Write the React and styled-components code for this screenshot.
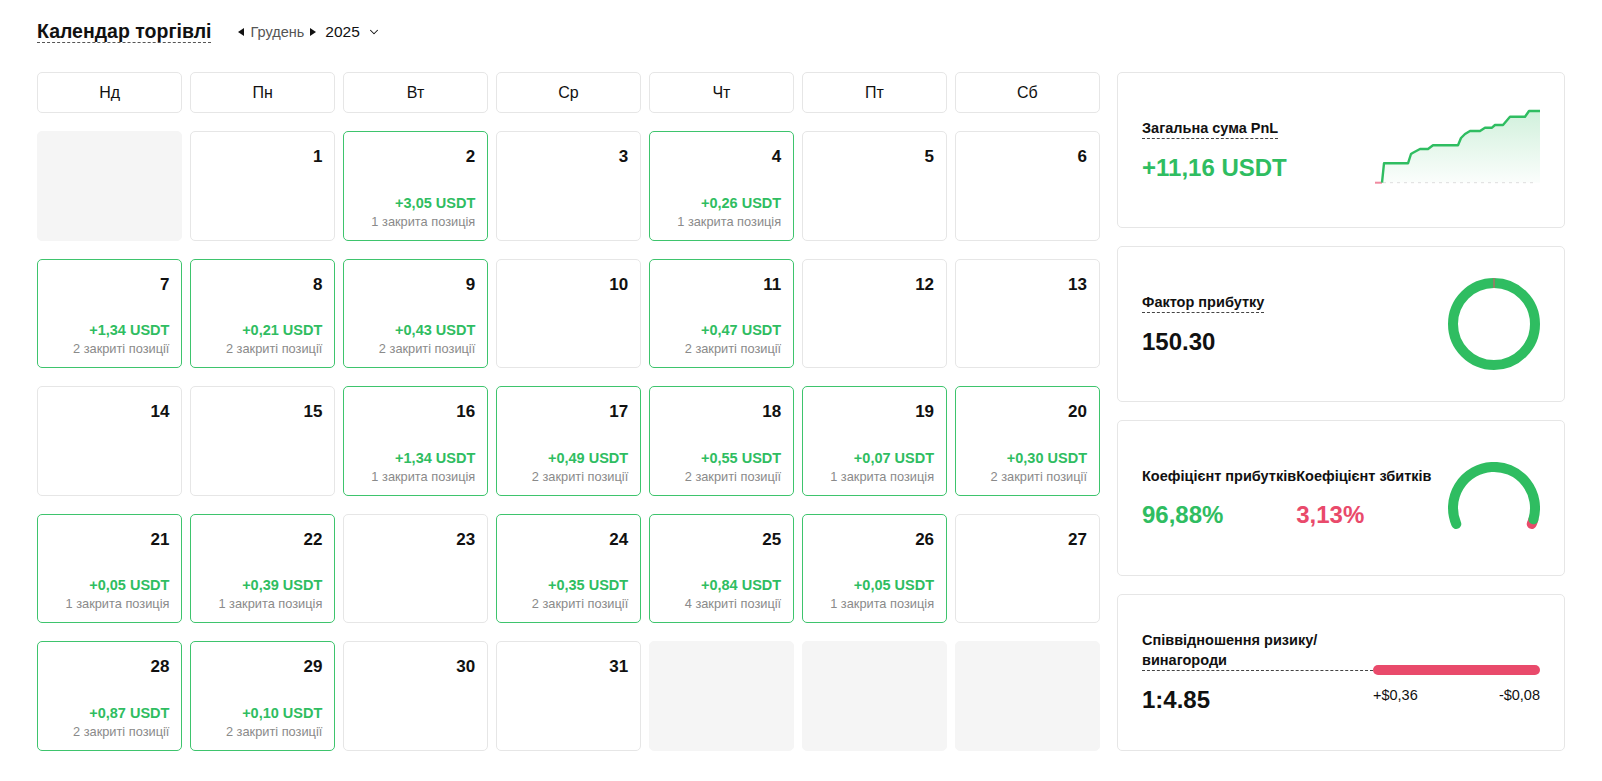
import React from 'react';
import styled, {createGlobalStyle} from 'styled-components';
import {ChevronDown} from 'lucide-react';

const GREEN = '#2fbd61';
const RED = '#e94a6b';

const Global = createGlobalStyle`
  html, body {
    margin: 0;
    background: #fff;
    font-family: "Liberation Sans", Arial, sans-serif;
    color: #111;
  }
`;

const Page = styled.div`
  padding: 20px 37px 0 37px;
  box-sizing: border-box;
  width: 1602px;
`;

const TopBar = styled.div`
  display: flex;
  align-items: center;
  gap: 27px;
  height: 23px;
`;

const Title = styled.h1`
  margin: 0;
  font-size: 19.5px;
  font-weight: 700;
  line-height: 22px;
  border-bottom: 1px dashed #555;
`;

const Picker = styled.div`
  display: flex;
  align-items: center;
  gap: 6px;
  font-size: 14.5px;
  color: #555;
`;

const Tri = styled.span`
  width: 0;
  height: 0;
  border-top: 4.5px solid transparent;
  border-bottom: 4.5px solid transparent;
  ${p => p.dir === 'left'
    ? 'border-right: 6px solid #111;'
    : 'border-left: 6px solid #111;'}
`;

const Year = styled.span`
  color: #111;
  font-size: 15.5px;
  display: flex;
  align-items: center;
  gap: 7px;
  margin-left: 3px;
`;

const Main = styled.div`
  display: grid;
  grid-template-columns: 1fr 448px;
  gap: 17px;
  margin-top: 29px;
`;

const Calendar = styled.div`
  display: grid;
  grid-template-columns: repeat(7, 1fr);
  grid-template-rows: 41px repeat(5, 109.5px);
  column-gap: 7.5px;
  row-gap: 18px;
`;

const DayHead = styled.div`
  border: 1px solid #e6e6e6;
  border-radius: 5px;
  display: flex;
  align-items: center;
  justify-content: center;
  font-size: 16px;
  color: #111;
`;

const Cell = styled.div`
  box-sizing: border-box;
  border-radius: 5px;
  border: 1px solid ${p => p.empty ? '#f5f5f5' : p.trade ? '#3ec46d' : '#e6e6e6'};
  background: ${p => p.empty ? '#f5f5f5' : '#fff'};
  display: flex;
  flex-direction: column;
  align-items: flex-end;
  padding: 15px 12px 9px 10px;
`;

const DayNum = styled.div`
  font-size: 17px;
  font-weight: 700;
  line-height: 20px;
`;

const Pnl = styled.div`
  margin-top: auto;
  font-size: 14.5px;
  font-weight: 700;
  color: ${GREEN};
  line-height: 18px;
`;

const Closed = styled.div`
  font-size: 12.8px;
  color: #8a8a8a;
  line-height: 19px;
`;

const Side = styled.div`
  display: flex;
  flex-direction: column;
  gap: 18px;
`;

const Card = styled.div`
  flex: 1;
  border: 1px solid #e6e6e6;
  border-radius: 5px;
  padding: 0 24px;
  display: flex;
  align-items: center;
  justify-content: space-between;
`;

const Stat = styled.div`
  display: flex;
  flex-direction: column;
  align-items: flex-start;
`;

const Label = styled.div`
  font-size: 14.5px;
  font-weight: 700;
  line-height: 20px;
  ${p => p.dashed && 'border-bottom: 1px dashed #444;'}
`;

const Value = styled.div`
  margin-top: 14px;
  font-size: 24px;
  font-weight: 700;
  line-height: 30px;
  color: ${p => p.color || '#111'};
`;

const Pair = styled.div`
  display: flex;
`;

const RatioGrid = styled.div`
  flex: 1;
  display: grid;
  grid-template-columns: 1fr 167px;
  align-items: end;
`;

const Bar = styled.div`
  height: 10px;
  border-radius: 5px;
  background: ${RED};
  margin-bottom: -4px;
`;

const Amounts = styled.div`
  display: flex;
  justify-content: space-between;
  font-size: 14.5px;
  line-height: 24px;
  margin-top: 12px;
  align-self: start;
`;

const days = [
  {empty: true},
  {d: 1}, {d: 2, p: '+3,05', c: '1 закрита позиція'}, {d: 3},
  {d: 4, p: '+0,26', c: '1 закрита позиція'}, {d: 5}, {d: 6},
  {d: 7, p: '+1,34', c: '2 закриті позиції'}, {d: 8, p: '+0,21', c: '2 закриті позиції'},
  {d: 9, p: '+0,43', c: '2 закриті позиції'}, {d: 10}, {d: 11, p: '+0,47', c: '2 закриті позиції'},
  {d: 12}, {d: 13},
  {d: 14}, {d: 15}, {d: 16, p: '+1,34', c: '1 закрита позиція'},
  {d: 17, p: '+0,49', c: '2 закриті позиції'}, {d: 18, p: '+0,55', c: '2 закриті позиції'},
  {d: 19, p: '+0,07', c: '1 закрита позиція'}, {d: 20, p: '+0,30', c: '2 закриті позиції'},
  {d: 21, p: '+0,05', c: '1 закрита позиція'}, {d: 22, p: '+0,39', c: '1 закрита позиція'},
  {d: 23}, {d: 24, p: '+0,35', c: '2 закриті позиції'}, {d: 25, p: '+0,84', c: '4 закриті позиції'},
  {d: 26, p: '+0,05', c: '1 закрита позиція'}, {d: 27},
  {d: 28, p: '+0,87', c: '2 закриті позиції'}, {d: 29, p: '+0,10', c: '2 закриті позиції'},
  {d: 30}, {d: 31}, {empty: true}, {empty: true}, {empty: true},
];

const heads = ['Нд', 'Пн', 'Вт', 'Ср', 'Чт', 'Пт', 'Сб'];

const pts = [
  [7, 76.7], [9, 57.3], [33, 57.3], [36, 48], [38, 46.7], [45, 43], [53, 43], [58, 39.3],
  [83, 39.3], [86, 32], [90, 28], [95, 25], [105, 25], [110, 21.7], [117, 21.7], [120, 19],
  [128, 19], [135, 10.7], [150, 10.7], [154, 5], [165, 5],
];

const PnlChart = () => {
  const line = pts.map((p, i) => (i ? 'L' : 'M') + p[0] + ' ' + p[1]).join(' ');
  return (
    <svg width="165" height="80" viewBox="0 0 165 80" style={{marginTop: -8}}>
      <defs>
        <linearGradient id="pg" x1="0" y1="0" x2="0" y2="1">
          <stop offset="0" stopColor={GREEN} stopOpacity="0.22"/>
          <stop offset="1" stopColor={GREEN} stopOpacity="0.02"/>
        </linearGradient>
      </defs>
      <path d={line + ' L165 76.7 L7 76.7 Z'} fill="url(#pg)"/>
      <line x1="8" y1="76.7" x2="160" y2="76.7" stroke="#ddd" strokeWidth="1" strokeDasharray="3 4"/>
      <line x1="0" y1="76.7" x2="7" y2="76.7" stroke="#f08aa0" strokeWidth="2"/>
      <path d={line} fill="none" stroke={GREEN} strokeWidth="2.4" strokeLinejoin="round"/>
    </svg>
  );
};

const Donut = () => (
  <svg width="92" height="92" viewBox="0 0 92 92">
    <circle cx="46" cy="46" r="41" fill="none" stroke={GREEN} strokeWidth="10"/>
    <line x1="46" y1="0" x2="46" y2="10" stroke={RED} strokeWidth="1"/>
  </svg>
);

const Gauge = () => (
  <svg width="92" height="72" viewBox="0 0 92 72">
    <path d="M85.4 57.3 A41 41 0 0 1 83.7 62" fill="none" stroke={RED} strokeWidth="10" strokeLinecap="round"/>
    <path d="M8.3 62 A41 41 0 1 1 85.4 57.3" fill="none" stroke={GREEN} strokeWidth="10" strokeLinecap="round"/>
  </svg>
);

export default function App() {
  return (
    <Page>
      <Global/>
      <TopBar>
        <Title>Календар торгівлі</Title>
        <Picker>
          <Tri dir="left"/>
          <span>Грудень</span>
          <Tri dir="right"/>
          <Year>2025 <ChevronDown size={14} strokeWidth={1.8}/></Year>
        </Picker>
      </TopBar>
      <Main>
        <Calendar>
          {heads.map(h => <DayHead key={h}>{h}</DayHead>)}
          {days.map((x, i) => (
            <Cell key={i} empty={x.empty} trade={!!x.p}>
              {x.d && <DayNum>{x.d}</DayNum>}
              {x.p && <Pnl>{x.p} USDT</Pnl>}
              {x.p && <Closed>{x.c}</Closed>}
            </Cell>
          ))}
        </Calendar>
        <Side>
          <Card>
            <Stat>
              <Label dashed>Загальна сума PnL</Label>
              <Value color={GREEN}>+11,16 USDT</Value>
            </Stat>
            <PnlChart/>
          </Card>
          <Card>
            <Stat>
              <Label dashed>Фактор прибутку</Label>
              <Value>150.30</Value>
            </Stat>
            <Donut/>
          </Card>
          <Card>
            <Pair>
              <Stat>
                <Label>Коефіцієнт прибутків</Label>
                <Value color={GREEN}>96,88%</Value>
              </Stat>
              <Stat>
                <Label>Коефіцієнт збитків</Label>
                <Value color={RED}>3,13%</Value>
              </Stat>
            </Pair>
            <Gauge/>
          </Card>
          <Card>
            <RatioGrid>
              <Label dashed>Співвідношення ризику/<br/>винагороди</Label>
              <Bar/>
              <Value>1:4.85</Value>
              <Amounts><span>+$0,36</span><span>-$0,08</span></Amounts>
            </RatioGrid>
          </Card>
        </Side>
      </Main>
    </Page>
  );
}
